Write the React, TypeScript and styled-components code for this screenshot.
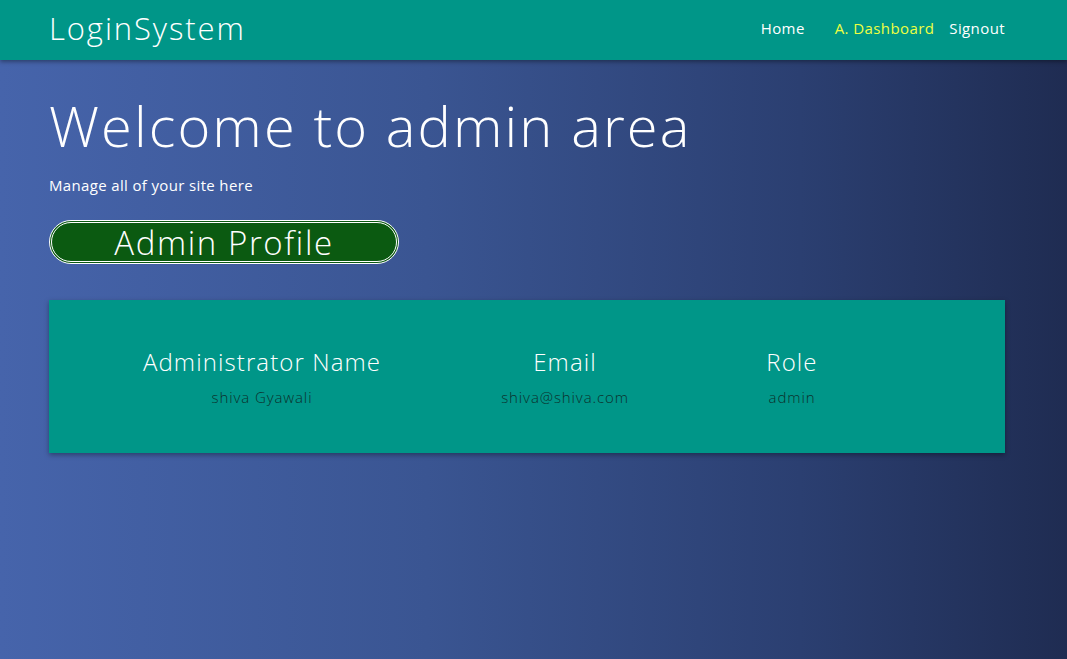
import React from "react";
import styled, { createGlobalStyle } from "styled-components";

const GlobalStyle = createGlobalStyle`
  *, *::before, *::after { box-sizing: border-box; }
  html, body { margin: 0; padding: 0; height: 100%; }
  body {
    font-family: "Open Sans", "Noto Sans", sans-serif;
    font-weight: 300;
    color: #fff;
    background: linear-gradient(to right, #4664ab 0%, #3a5592 40%, #2b3f71 75%, #1f2c52 100%);
    min-height: 659px;
  }
  #root { min-height: 659px; }
`;

const Navbar = styled.nav`
  height: 60px;
  background: #009688;
  box-shadow: 0 2px 4px rgba(0, 0, 0, 0.35);
  display: flex;
  align-items: center;
  justify-content: space-between;
  padding: 0 62px 4px 49px;
`;

const Brand = styled.a`
  font-size: 31px;
  font-weight: 300;
  color: #fff;
  text-decoration: none;
  letter-spacing: 1.9px;
`;

const NavList = styled.ul`
  list-style: none;
  display: flex;
  align-items: center;
  margin: 0;
  padding: 0;
`;

const NavItem = styled.li<{ $gap: number }>`
  margin-left: ${(p) => p.$gap}px;
`;

const NavLink = styled.a<{ $active?: boolean }>`
  font-size: 15px;
  font-weight: 400;
  letter-spacing: 0.4px;
  color: ${(p) => (p.$active ? "#eeff41" : "#fff")};
  text-decoration: none;
`;

const Main = styled.main`
  padding: 32px 62px 0 49px;
`;

const Title = styled.h1`
  font-size: 56px;
  font-weight: 300;
  letter-spacing: 2.1px;
  margin: 0;
  line-height: 1.2;
`;

const Lead = styled.p`
  font-size: 15px;
  font-weight: 400;
  letter-spacing: 0.35px;
  margin: 16px 0 0;
`;

const ProfileButton = styled.button`
  margin-top: 25px;
  width: 350px;
  height: 44px;
  border-radius: 22px;
  border: 3px double #fff;
  background: #0b5a11;
  color: #fff;
  font-family: inherit;
  font-weight: 300;
  font-size: 33px;
  letter-spacing: 1.6px;
  line-height: 1;
  padding: 0;
`;

const Card = styled.section`
  margin-top: 36px;
  height: 153px;
  background: #009688;
  box-shadow: 0 2px 5px rgba(0, 0, 0, 0.35);
  display: grid;
  grid-template-columns: 426px 180px 274px 1fr;
  align-content: start;
  padding-top: 45px;
`;

const Column = styled.div`
  text-align: center;
`;

const Label = styled.h3`
  font-size: 24px;
  font-weight: 300;
  letter-spacing: 1.1px;
  margin: 0;
  line-height: 34px;
`;

const Value = styled.p`
  font-size: 15px;
  letter-spacing: 0.9px;
  color: #0c302c;
  margin: 8px 0 0;
`;

const rows = [
  { label: "Administrator Name", value: "shiva Gyawali" },
  { label: "Email", value: "shiva@shiva.com" },
  { label: "Role", value: "admin" },
];

export default function App() {
  return (
    <>
      <GlobalStyle />
      <Navbar>
        <Brand href="#">LoginSystem</Brand>
        <NavList>
          <NavItem $gap={0}><NavLink href="#">Home</NavLink></NavItem>
          <NavItem $gap={30}><NavLink href="#" $active>A. Dashboard</NavLink></NavItem>
          <NavItem $gap={15}><NavLink href="#">Signout</NavLink></NavItem>
        </NavList>
      </Navbar>
      <Main>
        <Title>Welcome to admin area</Title>
        <Lead>Manage all of your site here</Lead>
        <ProfileButton>Admin Profile</ProfileButton>
        <Card>
          {rows.map((r) => (
            <Column key={r.label}>
              <Label>{r.label}</Label>
              <Value>{r.value}</Value>
            </Column>
          ))}
        </Card>
      </Main>
    </>
  );
}
